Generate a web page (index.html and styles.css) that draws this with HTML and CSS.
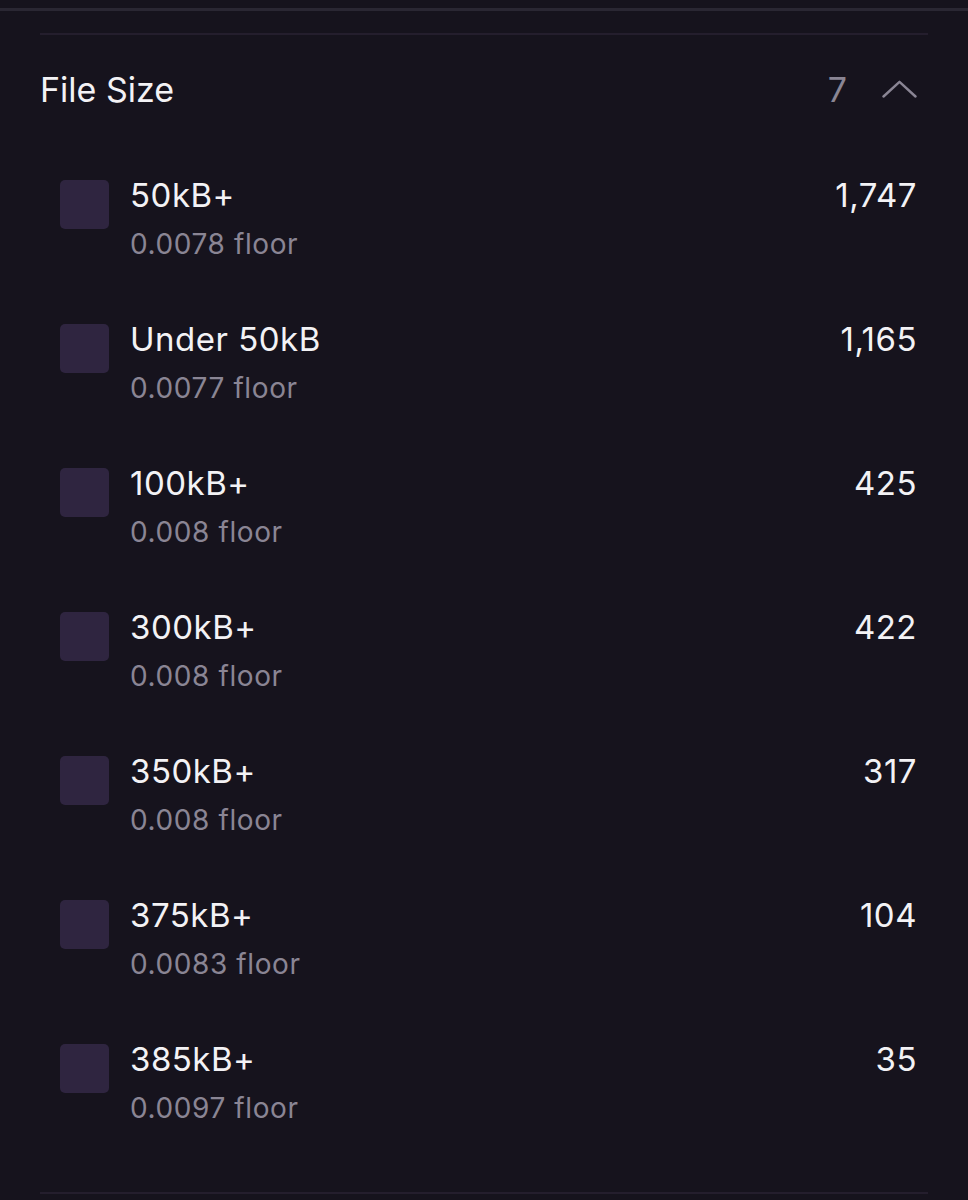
FILE: index.html
```html
<!DOCTYPE html>
<html lang="en">
<head>
    <meta charset="UTF-8">
    <meta name="viewport" content="width=device-width, initial-scale=1.0">
    <title>File Size Filter</title>
    <link rel="stylesheet" href="styles.css">
</head>
<body>

    <div class="topbar"></div>

    <div class="panel">
        <div class="divider"></div>

        <!-- Filter header -->
        <div class="filter-header">
            <span class="filter-title">File Size</span>
            <div class="filter-meta">
                <span class="filter-count">7</span>
                <svg class="chevron" width="35" height="18" viewBox="0 0 35 18">
                    <polyline points="1.5,16.5 17.5,1.8 33.5,16.5" fill="none" stroke="currentColor" stroke-width="2.4" stroke-linecap="round" stroke-linejoin="round"/>
                </svg>
            </div>
        </div>

        <!-- Options -->
        <ul class="option-list">
            <li class="option">
                <span class="checkbox"></span>
                <div class="option-text">
                    <span class="option-name">50kB+</span>
                    <span class="option-floor">0.0078 floor</span>
                </div>
                <span class="option-count">1,747</span>
            </li>
            <li class="option">
                <span class="checkbox"></span>
                <div class="option-text">
                    <span class="option-name">Under 50kB</span>
                    <span class="option-floor">0.0077 floor</span>
                </div>
                <span class="option-count">1,165</span>
            </li>
            <li class="option">
                <span class="checkbox"></span>
                <div class="option-text">
                    <span class="option-name">100kB+</span>
                    <span class="option-floor">0.008 floor</span>
                </div>
                <span class="option-count">425</span>
            </li>
            <li class="option">
                <span class="checkbox"></span>
                <div class="option-text">
                    <span class="option-name">300kB+</span>
                    <span class="option-floor">0.008 floor</span>
                </div>
                <span class="option-count">422</span>
            </li>
            <li class="option">
                <span class="checkbox"></span>
                <div class="option-text">
                    <span class="option-name">350kB+</span>
                    <span class="option-floor">0.008 floor</span>
                </div>
                <span class="option-count">317</span>
            </li>
            <li class="option">
                <span class="checkbox"></span>
                <div class="option-text">
                    <span class="option-name">375kB+</span>
                    <span class="option-floor">0.0083 floor</span>
                </div>
                <span class="option-count">104</span>
            </li>
            <li class="option">
                <span class="checkbox"></span>
                <div class="option-text">
                    <span class="option-name">385kB+</span>
                    <span class="option-floor">0.0097 floor</span>
                </div>
                <span class="option-count">35</span>
            </li>
        </ul>

        <div class="divider bottom"></div>
    </div>

</body>
</html>
```

FILE: styles.css
```css
:root {
    --bg: #16131d;
    --line: #241e2d;
    --topline: #2a2733;
    --box: #2f2540;
    --white: #f3f2f5;
    --gray: #8a8594;
}

* {
    margin: 0;
    padding: 0;
    box-sizing: border-box;
    font-family: "Inter", "Liberation Sans", sans-serif;
}

body {
    background: var(--bg);
    color: var(--white);
    padding-top: 8px;
}

.topbar {
    height: 3px;
    background: var(--topline);
}

.panel {
    padding: 0 40px;
}

.divider {
    height: 2px;
    margin-top: 22px;
    background: var(--line);
}

.divider.bottom {
    margin-top: 67px;
}

.filter-header {
    display: flex;
    justify-content: space-between;
    align-items: center;
    margin-top: 35px;
    padding-right: 11px;
    height: 40px;
}

.filter-title {
    font-size: 34px;
    line-height: 40px;
    color: var(--white);
}

.filter-meta {
    display: flex;
    align-items: center;
    gap: 35px;
    color: var(--gray);
}

.filter-count {
    font-size: 34px;
    line-height: 40px;
}

.chevron {
    display: block;
    margin-top: -2px;
}

.option-list {
    list-style: none;
    display: flex;
    flex-direction: column;
    gap: 58px;
    margin-top: 65px;
}

.option {
    display: flex;
    align-items: flex-start;
    padding-left: 20px;
    padding-right: 11px;
}

.checkbox {
    width: 49px;
    height: 49px;
    margin-top: 5px;
    border-radius: 5px;
    background: var(--box);
    flex-shrink: 0;
}

.option-text {
    display: flex;
    flex-direction: column;
    gap: 12px;
    margin-left: 21px;
    flex: 1;
}

.option-name {
    font-size: 33px;
    line-height: 40px;
    letter-spacing: 0.5px;
    color: var(--white);
}

.option-floor {
    font-size: 28px;
    line-height: 34px;
    letter-spacing: 0.6px;
    color: var(--gray);
}

.option-count {
    font-size: 33px;
    line-height: 40px;
    letter-spacing: 0.5px;
    color: var(--white);
}
```
